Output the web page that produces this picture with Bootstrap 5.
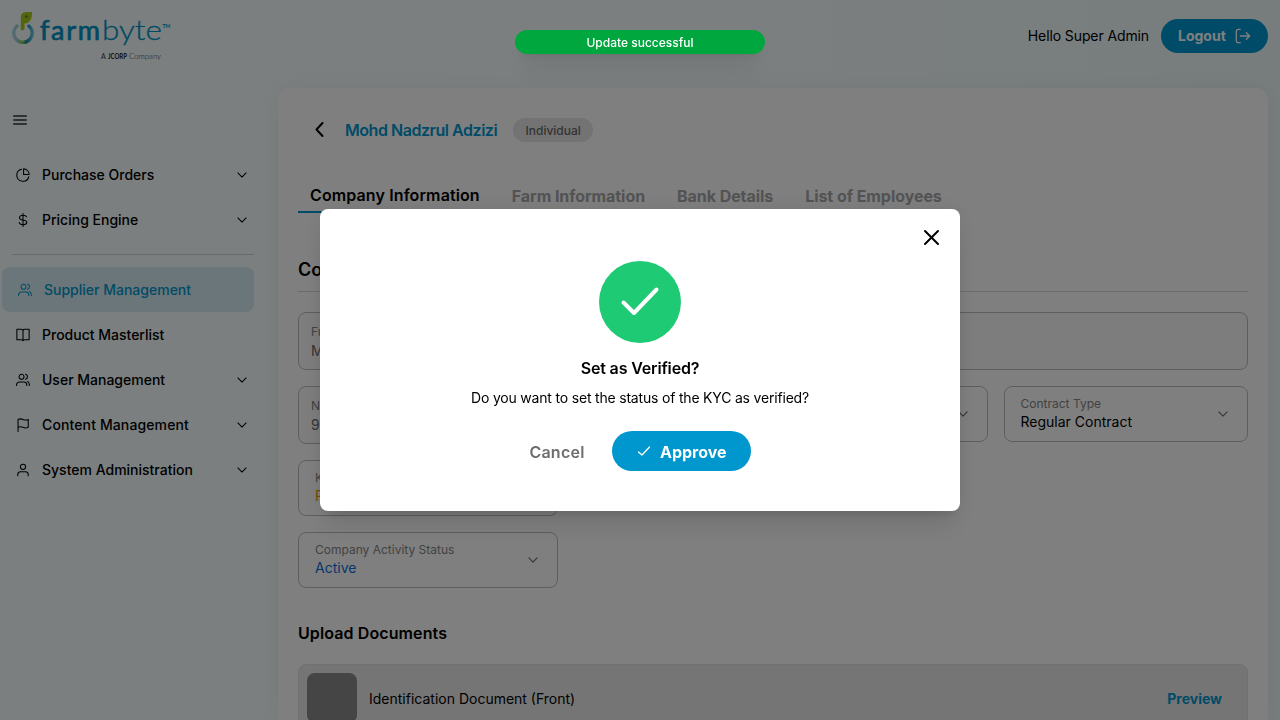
<!DOCTYPE html>
<html lang="en">
<head>
<meta charset="utf-8">
<meta name="viewport" content="width=device-width, initial-scale=1">
<title>Farmbyte - Supplier Management</title>
<link href="https://cdn.jsdelivr.net/npm/bootstrap@5.3.0/dist/css/bootstrap.min.css" rel="stylesheet">
<style>
:root{--brand:#0097ce}
body{font-family:Inter,"Liberation Sans",sans-serif;font-size:14px;line-height:20px;color:#000;background:linear-gradient(90deg,#f6feff 0%,#f8ffff 50%,#effafb 100%);height:720px;overflow:hidden}
svg{flex:none;display:block}
.ico{fill:none;stroke:currentColor;stroke-width:2;stroke-linecap:round;stroke-linejoin:round}
.topbar{height:72px;padding:0 12px}
.topbar .brandmark{margin-top:10px}
.hello{letter-spacing:-.11px}
.btn-brand{background:var(--brand);color:#fff;font-weight:700;border:0;border-radius:50px;display:flex;align-items:center}
.btn-logout{width:107px;height:34px;padding:0 17px;font-size:14px;justify-content:space-between}
.shell{height:648px;overflow:hidden}
.sidebar{width:278px;padding:0 24px 0 2px}
.side-link{height:45px;color:#000;font-weight:500;padding:0 5px 0 14px;border-radius:8px}
.side-link.active{background:#d5ecf3;color:var(--brand);padding-left:16px}
.side-link .ico{stroke-width:1.8;margin-right:12px}
.side-link .chev{margin:0 0 0 auto}
.side-rule{border-top:1px solid #d5d5d9;opacity:1;margin:12px 0 12px 10px}
.panel{background:#fff;border-radius:12px 12px 0 0;width:990px;height:632px;padding:0 20px;box-shadow:0 0 20px rgba(0,50,60,.06);overflow:hidden}
.panel-title{height:36px;margin-top:24px;padding-left:14px}
.who{font-size:16px;font-weight:600;color:var(--brand);margin-left:17px;letter-spacing:-.46px}
.kind{background:#e6e6e6;color:#666;font-size:12px;font-weight:500;line-height:24px;border-radius:12px;margin-left:16px;width:80px;padding-top:1px;height:24px}
.tabs{margin-top:30px;gap:8px;font-size:16px;font-weight:700;color:#a6a6a6;height:35px}
.tabs a{padding:8px 12px 0;color:inherit;text-decoration:none;white-space:nowrap;letter-spacing:-.06px}
.tabs a.active{color:#000;font-weight:600;padding-top:7px;border-bottom:2px solid var(--brand);letter-spacing:.12px}
.sect{font-size:18px;font-weight:600;line-height:24px}
.rule{border-top:1px solid #d8d8d8;opacity:1;margin:9px 0 20px}
.field{border:1px solid #bcbcbc;border-radius:8px;height:58px;padding:9px 12px 0;color:#6a6a6a;white-space:nowrap;overflow:hidden}
.field.off{background:#fafafa}
.field.pick{height:56px;padding:7px 16px 0}
.field.pick span{line-height:15px}
.field small{display:block;font-size:12px;line-height:20px;color:#858585}
.field span{display:block;line-height:17px}
.w-status{width:260px}
.w-contract{width:244.5px}
.upload{letter-spacing:.1px}
.doc{background:#ebebeb;border:1px solid #e2e2e2;border-radius:8px;height:68px;padding:0 25px 0 8px}
.doc span,.doc a{padding-top:2px}
.thumb{width:50px;height:50px;border-radius:8px;background:#8a8a8a;margin-right:12px}
.preview{color:var(--brand);font-weight:700}
.modal-backdrop{--bs-backdrop-opacity:.5}
.confirm{width:640px;max-width:640px;margin:209px auto 0}
.confirm .modal-content{height:302px;border:0;border-radius:8px;box-shadow:0 20px 25px -5px rgba(0,0,0,.1),0 8px 10px -6px rgba(0,0,0,.1),0 0 20px rgba(0,0,0,.08)}
.xclose{right:19px;top:19px;color:#000;background:none}
.okmark{width:82px;height:82px;background:#1fca75;margin-top:52px}
.ask{letter-spacing:-.15px}
.say{letter-spacing:-.19px}
.btn-approve{width:139px;height:40px;font-size:16px;padding:0 24px 0 25px;justify-content:space-between}
.appr{padding-top:2px}
.btn-cancel{color:#6e6e6e;font-size:16px;font-weight:600;margin-right:27px;letter-spacing:.25px;padding-top:2px!important}
.notice{top:30px;left:515px;width:250px;height:24px;padding-top:1px;border-radius:12px;background:#00a63e;color:#fff;font-size:12px;font-weight:500;z-index:1090;box-shadow:0 20px 25px -5px rgba(0,0,0,.1),0 8px 10px -6px rgba(0,0,0,.1)}
</style>
</head>
<body>
<svg class="d-none">
  <symbol id="chev" viewBox="0 0 24 24"><path d="M5 8.500l7 7 7-7"/></symbol>
  <symbol id="users" viewBox="0 0 24 24"><circle cx="9.500" cy="6.500" r="4.300"/><path d="M1 21.500v-1a5 5 0 0 1 5-5h7.500a5 5 0 0 1 5 5v1M16.500 2.200a4.500 4.500 0 0 1 0 8.600M20 14.500q3 1.500 3 7"/></symbol>
</svg>

<header class="topbar d-flex align-items-center">
  <svg class="brandmark align-self-start" width="165" height="56" viewBox="12 10 165 56" role="img" aria-label="farmbyte">
    <defs><linearGradient id="ring" x1="0" x2="1" y1="0" y2="0"><stop offset="0" stop-color="#a9d9e9"/><stop offset=".3" stop-color="#8fcdb0"/><stop offset=".5" stop-color="#8cc63f"/><stop offset=".68" stop-color="#0c86a8"/><stop offset="1" stop-color="#66c3e0"/></linearGradient></defs>
    <path d="M17 26A9.300 9.300 0 1 0 29 26" fill="none" stroke="url(#ring)" stroke-width="3.400" stroke-linecap="round"/>
    <path d="M20.800 30V17Q21 12 27 12h5q.6 11-7.500 11.500V29q-1.500 2-3.700 1z" fill="#aacb18"/>
    <circle cx="26.500" cy="16.500" r="1.600" fill="#4e9e3c"/>
    <g fill="#0093c4" stroke="#0093c4" font-family="Lato, sans-serif" font-size="27"><text x="40" y="39.500" stroke-width=".7" textLength="60">farm</text><text x="102" y="39.500" font-weight="300" stroke-width=".3" textLength="60" lengthAdjust="spacingAndGlyphs">byte</text><text x="162.500" y="28" font-size="6" stroke="none" font-weight="700" textLength="8" lengthAdjust="spacingAndGlyphs">TM</text></g>
    <g fill="#333" font-family="Lato, sans-serif" font-size="7"><text x="101" y="59" textLength="5">A</text><text x="108" y="59" font-weight="900" textLength="19" lengthAdjust="spacingAndGlyphs">JCORP</text><text x="129" y="59" font-weight="300" textLength="32" lengthAdjust="spacingAndGlyphs">Company</text></g>
  </svg>
  <span class="ms-auto me-2 pe-1 hello">Hello Super Admin</span>
  <button class="btn-brand btn-logout">Logout
    <svg class="ico" width="16" height="16" viewBox="0 0 24 24"><path d="M8 2H5a3 3 0 0 0-3 3v14a3 3 0 0 0 3 3h3M8 12h14M17 7l5 5-5 5"/></svg>
  </button>
</header>

<div class="shell d-flex">
  <aside class="sidebar flex-shrink-0">
    <svg class="ico" width="16" height="16" viewBox="0 0 16 16" style="margin:40px 0 24px 10px;color:#333;stroke-width:1.6"><path d="M1.800 4h12.400M1.800 8h12.400M1.800 12h12.400"/></svg>
    <nav>
      <a class="side-link d-flex align-items-center text-decoration-none" href="#"><svg class="ico" width="14" height="14" viewBox="0 0 24 24"><path d="M9.500 2A10.500 10.500 0 1 0 22 15M13 1.500V11h9.500A9.500 9.500 0 0 0 13 1.500z"/></svg><span>Purchase Orders</span><svg class="ico chev" width="14" height="14"><use href="#chev"/></svg></a>
      <a class="side-link d-flex align-items-center text-decoration-none" href="#"><svg class="ico" width="14" height="14" viewBox="0 0 24 24"><path d="M12 1v22M18 6.500C17 4.500 15 4 12 4 8.500 4 6 5 6 8s2.500 3.500 6 4 6.500 1 6.500 4-3 4-6.500 4-6-1-6.500-3.500"/></svg><span>Pricing Engine</span><svg class="ico chev" width="14" height="14"><use href="#chev"/></svg></a>
      <hr class="side-rule">
      <a class="side-link active d-flex align-items-center text-decoration-none" href="#"><svg class="ico" width="14" height="14"><use href="#users"/></svg><span>Supplier Management</span></a>
      <a class="side-link d-flex align-items-center text-decoration-none" href="#"><svg class="ico" width="14" height="14" viewBox="0 0 24 24"><path d="M12 5v17M1.500 2H9q3 0 3 3 0-3 3-3h7.500v18H15q-3 0-3 2 0-2-3-2H1.500z"/></svg><span>Product Masterlist</span></a>
      <a class="side-link d-flex align-items-center text-decoration-none" href="#"><svg class="ico" width="14" height="14"><use href="#users"/></svg><span>User Management</span><svg class="ico chev" width="14" height="14"><use href="#chev"/></svg></a>
      <a class="side-link d-flex align-items-center text-decoration-none" href="#"><svg class="ico" width="14" height="14" viewBox="0 0 24 24"><path d="M3.500 23V2.500q4-2 8.500 0t9 0V16q-4.500 2-9 0t-8.500 0"/></svg><span style="letter-spacing:.12px">Content Management</span><svg class="ico chev" width="14" height="14"><use href="#chev"/></svg></a>
      <a class="side-link d-flex align-items-center text-decoration-none" href="#"><svg class="ico" width="14" height="14" viewBox="0 0 24 24"><circle cx="12" cy="6.500" r="4.500"/><path d="M3 22v-2a5 5 0 0 1 5-5h8a5 5 0 0 1 5 5v2"/></svg><span>System Administration</span><svg class="ico chev" width="14" height="14"><use href="#chev"/></svg></a>
    </nav>
  </aside>

  <main class="panel flex-shrink-0 mt-3">
    <div class="panel-title d-flex align-items-center">
      <svg class="ico" width="16" height="16" viewBox="0 0 16 16"><path d="M10.500 1L4.500 7.500l6 6.500"/></svg>
      <span class="who">Mohd Nadzrul Adzizi</span><span class="kind text-center">Individual</span>
    </div>
    <nav class="tabs d-flex">
      <a class="active" href="#">Company Information</a><a href="#">Farm Information</a><a href="#">Bank Details</a><a href="#">List of Employees</a>
    </nav>
    <h2 class="sect mb-0" style="margin-top:45px">Company Information</h2>
    <hr class="rule">
    <div class="field off mb-3"><small>Full Name</small><span>Mohd Nadzrul Adzizi</span></div>
    <div class="d-flex gap-3 mb-3">
      <div class="field off w-contract"><small>NRIC No.</small><span>97</span></div>
      <div class="field pick flex-fill d-flex align-items-center justify-content-end pt-0"><svg class="ico" width="14" height="14" style="margin-right:1px"><use href="#chev"/></svg></div>
      <div class="field pick w-contract d-flex justify-content-between"><div><small>Contract Type</small><span class="text-black">Regular Contract</span></div><svg class="ico" width="14" height="14" style="margin:13px 1px 0 0"><use href="#chev"/></svg></div>
    </div>
    <div class="field pick w-status mb-3"><small>KYC Status</small><span style="color:#e59a00">Pending</span></div>
    <div class="field pick w-status d-flex justify-content-between"><div><small>Company Activity Status</small><span style="color:#0b6fd6">Active</span></div><svg class="ico" width="14" height="14" style="margin:13px 1px 0 0"><use href="#chev"/></svg></div>
    <h3 class="fs-6 fw-semibold upload" style="margin:36px 0 21px">Upload Documents</h3>
    <div class="doc d-flex align-items-center"><div class="thumb"></div><span>Identification Document (Front)</span><a class="preview ms-auto text-decoration-none" href="#">Preview</a></div>
  </main>
</div>

<div class="modal-backdrop show"></div>
<div class="modal d-block" tabindex="-1" role="dialog">
  <div class="modal-dialog confirm">
    <div class="modal-content align-items-center">
      <button class="xclose position-absolute border-0 p-0" aria-label="Close"><svg class="ico" width="19" height="19" viewBox="0 0 19 19"><path d="M3 3l13 13M16 3L3 16"/></svg></button>
      <div class="okmark rounded-circle d-flex align-items-center justify-content-center"><svg class="ico text-white" width="40" height="40" viewBox="0 0 40 40" style="stroke-width:4"><path d="M3.500 20.500L14 31 36.500 7.500"/></svg></div>
      <h1 class="fs-6 fw-semibold mb-0 ask" style="margin-top:16px">Set as Verified?</h1>
      <p class="mb-0 say" style="margin-top:10px">Do you want to set the status of the KYC as verified?</p>
      <div class="d-flex align-items-center" style="margin-top:23px"><button class="btn-cancel border-0 bg-transparent p-0">Cancel</button><button class="btn-brand btn-approve"><svg class="ico" width="14" height="14" viewBox="0 0 14 14" style="stroke-width:1.3"><path d="M1.500 8L5 11l7.500-8"/></svg><span class="appr">Approve</span></button></div>
    </div>
  </div>
</div>
<div class="notice position-fixed d-flex align-items-center justify-content-center" role="status">Update successful</div>
<script src="https://cdn.jsdelivr.net/npm/bootstrap@5.3.0/dist/js/bootstrap.bundle.min.js"></script>
</body>
</html>
